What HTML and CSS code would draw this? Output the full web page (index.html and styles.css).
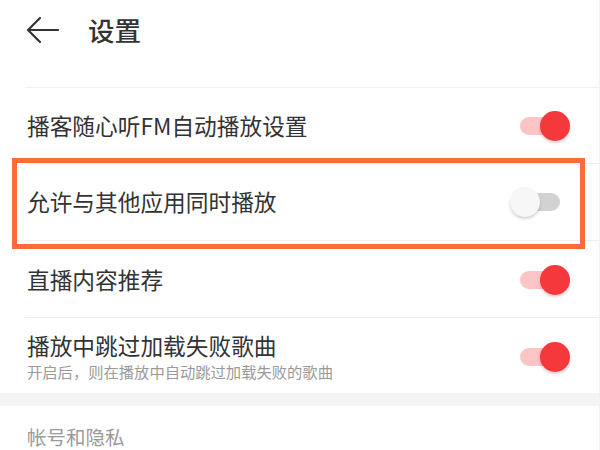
FILE: index.html
```html
<!DOCTYPE html>
<html lang="zh">
<head>
<meta charset="utf-8">
<title>设置</title>
<link rel="stylesheet" href="styles.css">
</head>
<body>
<div class="page">
  <header class="header">
    <svg class="back" width="32" height="26" viewBox="0 0 32 26" aria-hidden="true">
      <path d="M1 13 H31 M13 1 L1 13 L13 25" fill="none" stroke="#333" stroke-width="2.2" stroke-linecap="round" stroke-linejoin="round"/>
    </svg>
    <h1 class="title">设置</h1>
  </header>
  <div class="list">
    <div class="row r1">
      <span class="label">播客随心听FM自动播放设置</span>
      <span class="switch on"></span>
    </div>
    <div class="row r2">
      <span class="label">允许与其他应用同时播放</span>
      <span class="switch"></span>
    </div>
    <div class="row r3">
      <span class="label">直播内容推荐</span>
      <span class="switch on"></span>
    </div>
    <div class="row r4">
      <div class="texts">
        <span class="label">播放中跳过加载失败歌曲</span>
        <span class="sub">开启后，则在播放中自动跳过加载失败的歌曲</span>
      </div>
      <span class="switch on"></span>
    </div>
  </div>
  <div class="band"></div>
  <div class="section">帐号和隐私</div>
  <div class="highlight"></div>
</div>
</body>
</html>
```
FILE: styles.css
```css
html, body {
  margin: 0;
  padding: 0;
  background: #ffffff;
}
body {
  font-family: "Noto Sans CJK SC", "Noto Sans", sans-serif;
  color: #333333;
}
.page {
  position: relative;
  width: 600px;
  height: 450px;
  overflow: hidden;
  border-right: 1px solid #f2f2f2;
  box-sizing: border-box;
}
.header {
  height: 87px;
  display: flex;
  align-items: center;
  padding-left: 27px;
  box-sizing: border-box;
  padding-bottom: 28px;
}
.back {
  display: block;
}
.title {
  margin: 0 0 0 29px;
  font-size: 26.5px;
  font-weight: 500;
  line-height: 30px;
  color: #333333;
}
.list {
  display: flex;
  flex-direction: column;
}
.row {
  display: flex;
  align-items: center;
  justify-content: space-between;
  margin-left: 25px;
  padding: 0 29px 0 2px;
  border-top: 1px solid #efefef;
  box-sizing: border-box;
}
.r1 { height: 76px; }
.r2 { height: 77px; }
.r3 { height: 77px; padding-top: 2px; }
.r4 { height: 76px; padding-top: 2px; }
.label {
  font-size: 22.7px;
  line-height: 28px;
  color: #333333;
}
.texts {
  display: flex;
  flex-direction: column;
}
.sub {
  font-size: 15.3px;
  line-height: 20px;
  margin-top: 1px;
  color: #9a9a9a;
}
.switch {
  position: relative;
  width: 60px;
  height: 30px;
  flex: none;
}
.switch::before {
  content: "";
  position: absolute;
  left: 10px;
  top: 6px;
  width: 40px;
  height: 18px;
  border-radius: 9px;
  background: #d2d2d2;
}
.switch::after {
  content: "";
  position: absolute;
  left: 0;
  top: 0;
  width: 30px;
  height: 30px;
  border-radius: 50%;
  background: #f7f7f7;
  box-shadow: 0 2px 3px rgba(0, 0, 0, 0.18);
}
.switch.on::before {
  background: #fdc4c6;
}
.switch.on::after {
  left: 30px;
  background: #f5383b;
  box-shadow: 0 2px 3px rgba(120, 0, 0, 0.2);
}
.band {
  height: 13px;
  background: #f4f4f4;
}
.section {
  box-sizing: border-box;
  padding-left: 27px;
  padding-top: 18px;
  height: 44px;
  font-size: 19.5px;
  line-height: 26px;
  color: #9a9a9a;
}
.highlight {
  position: absolute;
  left: 12px;
  top: 158px;
  width: 573px;
  height: 91px;
  border: 5px solid #fb6b3d;
  box-sizing: border-box;
}
```
